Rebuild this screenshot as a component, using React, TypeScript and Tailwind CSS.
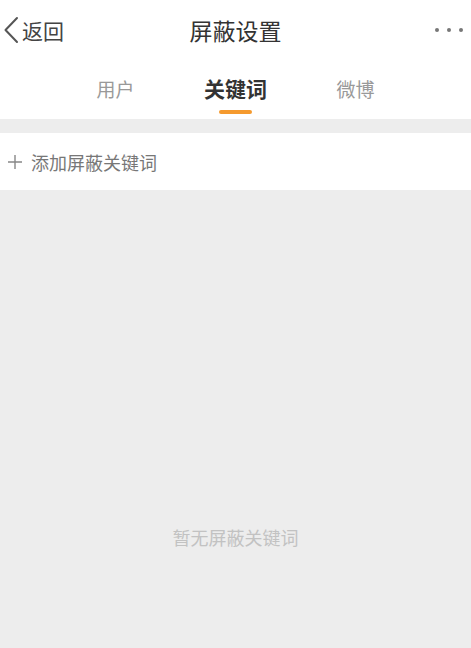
const tabs = ["用户", "关键词", "微博"];

export default function App() {
  const active = 1;

  return (
    <div
      className="flex h-[648px] w-full flex-col bg-[#ededed]"
      style={{ fontFamily: '"Noto Sans CJK SC", "Noto Sans", sans-serif' }}
    >
      <header className="flex h-[60px] items-center bg-white">
        <div className="flex w-[120px] items-center text-[#444]">
          <svg className="ml-[3px] mr-[3px] h-[28px] w-[16px]" viewBox="0 0 16 28" fill="none">
            <path d="M14 2 L2.5 14 L14 26" stroke="#555" strokeWidth="2" strokeLinecap="round" strokeLinejoin="round" />
          </svg>
          <span className="text-[21px] leading-none">返回</span>
        </div>
        <h1 className="flex-1 text-center text-[23px] leading-none text-[#333]">屏蔽设置</h1>
        <div className="flex w-[120px] justify-end gap-[8px] pr-[8px]">
          <span className="h-[4px] w-[4px] rounded-full bg-[#777]" />
          <span className="h-[4px] w-[4px] rounded-full bg-[#777]" />
          <span className="h-[4px] w-[4px] rounded-full bg-[#777]" />
        </div>
      </header>

      <nav className="flex h-[59px] justify-center bg-white">
        {tabs.map((tab, index) => (
          <div key={tab} className="relative flex w-[120px] items-center justify-center pb-[2px]">
            <span
              className={
                index === active
                  ? "text-[21px] font-bold leading-none text-[#333]"
                  : "text-[19px] leading-none text-[#999]"
              }
            >
              {tab}
            </span>
            {index === active && (
              <span className="absolute bottom-[5px] h-[4px] w-[33px] rounded-full bg-[#f59a2e]" />
            )}
          </div>
        ))}
      </nav>

      <div className="mt-[14px] flex h-[57px] items-center gap-[9px] bg-white pl-[8px] text-[#777]">
        <svg className="h-[14px] w-[14px]" viewBox="0 0 14 14" fill="none">
          <path d="M7 0 V14 M0 7 H14" stroke="#888" strokeWidth="1.4" />
        </svg>
        <span className="text-[18px] leading-none">添加屏蔽关键词</span>
      </div>

      <div className="flex flex-1 justify-center pt-[338px]">
        <span className="text-[18px] leading-none text-[#c2c2c2]">暂无屏蔽关键词</span>
      </div>
    </div>
  );
}
